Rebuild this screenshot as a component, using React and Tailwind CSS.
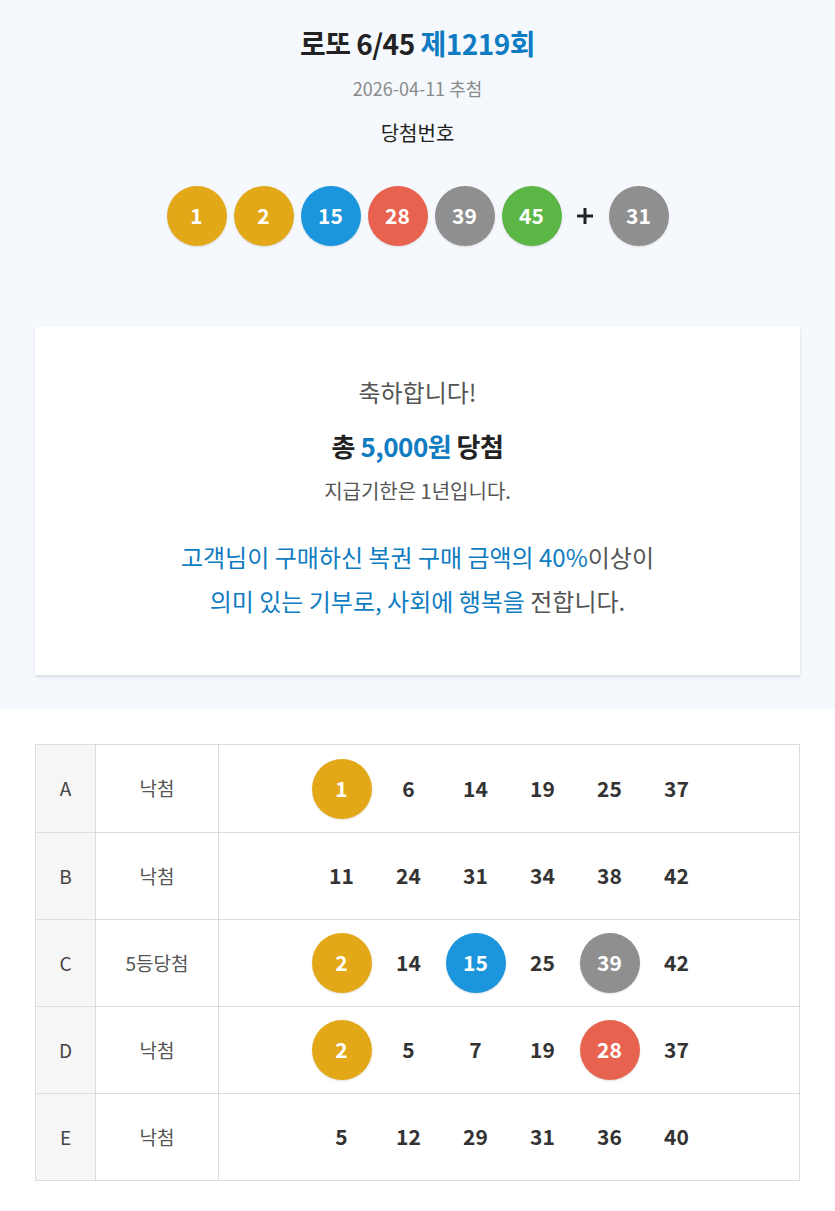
import React from "react";

const WIN = [1, 2, 15, 28, 39, 45];
const BONUS = 31;

function ballColor(n) {
  if (n <= 10) return "bg-[#e3a817]";
  if (n <= 20) return "bg-[#1b95dc]";
  if (n <= 30) return "bg-[#e8634f]";
  if (n <= 40) return "bg-[#8f8f8f]";
  return "bg-[#5cb646]";
}

function Ball({ n }) {
  return (
    <div
      className={`w-[60px] h-[60px] rounded-full flex items-center justify-center text-white text-[21px] font-bold shadow-[0_1px_2px_rgba(0,0,0,0.12)] ${ballColor(n)}`}
    >
      {n}
    </div>
  );
}

const ROWS = [
  { id: "A", result: "낙첨", nums: [1, 6, 14, 19, 25, 37] },
  { id: "B", result: "낙첨", nums: [11, 24, 31, 34, 38, 42] },
  { id: "C", result: "5등당첨", nums: [2, 14, 15, 25, 39, 42] },
  { id: "D", result: "낙첨", nums: [2, 5, 7, 19, 28, 37] },
  { id: "E", result: "낙첨", nums: [5, 12, 29, 31, 36, 40] },
];

export default function App() {
  const font = { fontFamily: '"Noto Sans CJK KR", "Noto Sans", sans-serif' };
  return (
    <div className="w-[835px] min-h-[1211px] bg-white" style={font}>
      <section className="bg-[#f5f9fe] pt-[23px] pb-[34px] flex flex-col items-center">
        <h1 className="text-[28px] leading-[40px] font-bold text-[#222] tracking-[-0.5px]">
          로또 6/45 <span className="text-[#0f7cc2]">제1219회</span>
        </h1>
        <div className="mt-[13px] text-[18px] leading-[24px] text-[#8a8a8a]">2026-04-11 추첨</div>
        <div className="mt-[19px] text-[20px] leading-[28px] text-[#222]">당첨번호</div>
        <div className="mt-[39px] flex items-center gap-[7px]">
          {WIN.map((n) => (
            <Ball key={n} n={n} />
          ))}
          <div className="w-[33px] flex items-center justify-center">
            <svg width="20" height="20" viewBox="0 0 20 20">
              <path d="M10 2v16M2 10h16" stroke="#222" strokeWidth="3" />
            </svg>
          </div>
          <Ball n={BONUS} />
        </div>
        <div className="mt-[81px] w-[765px] bg-white shadow-[0_2px_3px_rgba(0,0,0,0.12)] pt-[49px] pb-[52px] flex flex-col items-center text-center">
          <div className="text-[24px] leading-[32px] text-[#555]">축하합니다!</div>
          <div className="mt-[21px] text-[26px] leading-[34px] font-bold text-[#222] tracking-[-0.5px]">
            총 <span className="text-[#0f7cc2]">5,000원</span> 당첨
          </div>
          <div className="mt-[15px] text-[20px] leading-[26px] text-[#555]">지급기한은 1년입니다.</div>
          <div className="mt-[31px] text-[24px] leading-[44px] text-[#0f7cc2]">
            <div>
              고객님이 구매하신 복권 구매 금액의 40%<span className="text-[#555]">이상이</span>
            </div>
            <div>
              의미 있는 기부로, 사회에 행복을 <span className="text-[#555]">전합니다.</span>
            </div>
          </div>
        </div>
      </section>
      <div className="mt-[35px] mx-[35px] border-[1.5px] border-[#dcdcdc]">
        {ROWS.map((r, i) => (
          <div
            key={r.id}
            className={`flex h-[87px] ${i > 0 ? "border-t-[1.5px] border-[#dcdcdc]" : ""}`}
          >
            <div className="w-[60px] bg-[#f6f6f6] flex items-center justify-center text-[19px] text-[#444] border-r-[1.5px] border-[#dcdcdc]">
              {r.id}
            </div>
            <div className="w-[123px] flex items-center justify-center text-[19px] text-[#555] border-r-[1.5px] border-[#dcdcdc]">
              {r.result}
            </div>
            <div className="flex-1 flex items-center justify-center gap-[7px]">
              {r.nums.map((n) =>
                WIN.includes(n) ? (
                  <Ball key={n} n={n} />
                ) : (
                  <div
                    key={n}
                    className="w-[60px] h-[60px] flex items-center justify-center text-[21px] font-bold text-[#333]"
                  >
                    {n}
                  </div>
                )
              )}
            </div>
          </div>
        ))}
      </div>
    </div>
  );
}
